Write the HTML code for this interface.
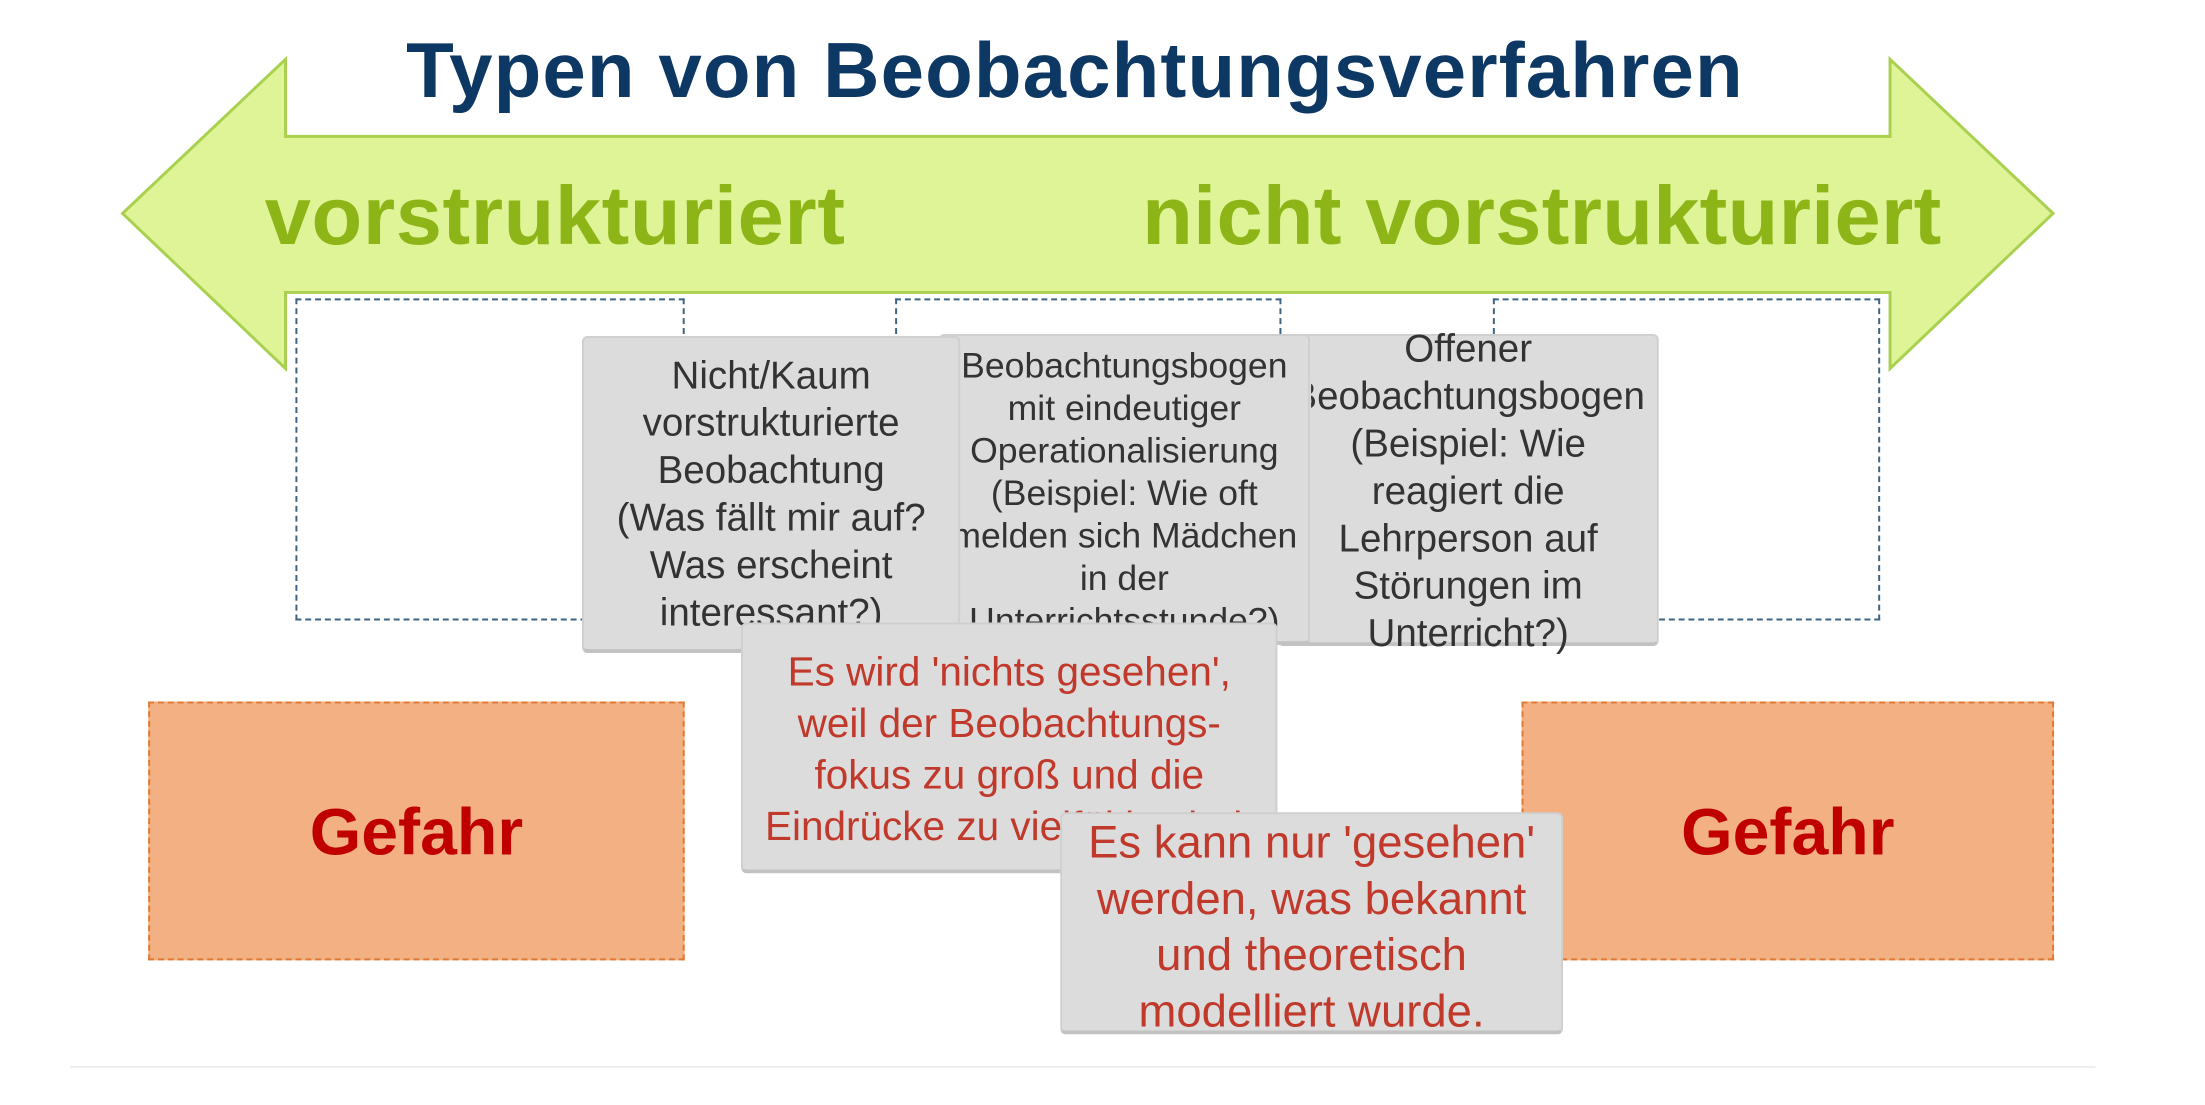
<!DOCTYPE html>
<html><head><meta charset="utf-8"><style>
html,body{margin:0;padding:0;background:#fff;}
body{width:2205px;height:1104px;position:relative;overflow:hidden;font-family:"Liberation Sans",Arial,sans-serif;}
#w{position:absolute;left:0;top:0;width:2232px;height:1118px;transform:scale(0.988);transform-origin:0 0;}
.abs{position:absolute;}
.title{left:0;width:2176px;top:26px;text-align:center;font-weight:bold;font-size:79px;color:#0c3863;letter-spacing:1.1px;line-height:90px;}
.green{font-weight:bold;font-size:84px;color:#8db518;line-height:90px;top:173px;}
.dash{border:2px dashed #3d6385;box-sizing:border-box;}
.card{background:#dcdcdc;border:2px solid #cfcfcf;border-bottom:4px solid #c2c2c2;border-radius:6px;box-sizing:border-box;color:#333;text-align:center;}
.gef{background:#f3b183;border:2px dashed #df7a35;box-sizing:border-box;color:#c00000;font-weight:bold;font-size:67px;text-align:center;}
.red{color:#c0392b;}
</style></head><body><div id="w">
<svg class="abs" style="left:0;top:0" width="2232" height="420">
<polygon points="124,216 289,60 289,138 1913,138 1913,60 2078,216 1913,373 1913,296 289,296 289,373" fill="#dff496" stroke="#a9d04f" stroke-width="3"/>
</svg>
<div class="abs title">Typen von Beobachtungsverfahren</div>
<div class="abs green" style="left:268px;letter-spacing:0.6px;">vorstrukturiert</div>
<div class="abs green" style="left:1156px;letter-spacing:0.3px;">nicht vorstrukturiert</div>

<div class="abs dash" style="left:299px;top:302px;width:394px;height:326px;"></div>
<div class="abs dash" style="left:906px;top:302px;width:391px;height:326px;"></div>
<div class="abs dash" style="left:1511px;top:302px;width:392px;height:326px;"></div>

<div class="abs card" style="left:1293px;top:338px;width:386px;height:316px;font-size:39px;line-height:48px;">
<div style="position:absolute;left:0;right:0;top:-10px;clip-path:inset(-100px 0 -100px 32px);">Offener<br>Beobachtungsbogen<br>(Beispiel: Wie<br>reagiert die<br>Lehrperson auf<br>Störungen im<br>Unterricht?)</div></div>

<div class="abs card" style="left:950px;top:338px;width:376px;height:315px;font-size:36px;line-height:43px;overflow:hidden;">
<div style="padding-top:8px;">Beobachtungsbogen<br>mit eindeutiger<br>Operationalisierung<br>(Beispiel: Wie oft<br>melden sich Mädchen<br>in der<br>Unterrichtsstunde?)</div></div>

<div class="abs card" style="left:589px;top:340px;width:383px;height:321px;font-size:39px;line-height:48px;overflow:hidden;">
<div style="padding-top:15px;">Nicht/Kaum<br>vorstrukturierte<br>Beobachtung<br>(Was fällt mir auf?<br>Was erscheint<br>interessant?)</div></div>

<div class="abs gef" style="left:150px;top:710px;width:543px;height:262px;line-height:262px;">Gefahr</div>
<div class="abs gef" style="left:1540px;top:710px;width:539px;height:262px;line-height:262px;">Gefahr</div>

<div class="abs card red" style="left:750px;top:630px;width:543px;height:254px;font-size:41px;line-height:52px;overflow:hidden;">
<div style="padding-top:22px;">Es wird 'nichts gesehen',<br>weil der Beobachtungs-<br>fokus zu groß und die<br>Eindrücke zu vielfältig sind.</div></div>

<div class="abs card red" style="left:1073px;top:822px;width:509px;height:225px;font-size:46px;line-height:57px;overflow:hidden;">
<div style="padding-top:0px;">Es kann nur 'gesehen'<br>werden, was bekannt<br>und theoretisch<br>modelliert wurde.</div></div>

<div class="abs" style="left:71px;top:1079px;width:2050px;height:2px;background:#eeeeee;"></div>
</div></body></html>
